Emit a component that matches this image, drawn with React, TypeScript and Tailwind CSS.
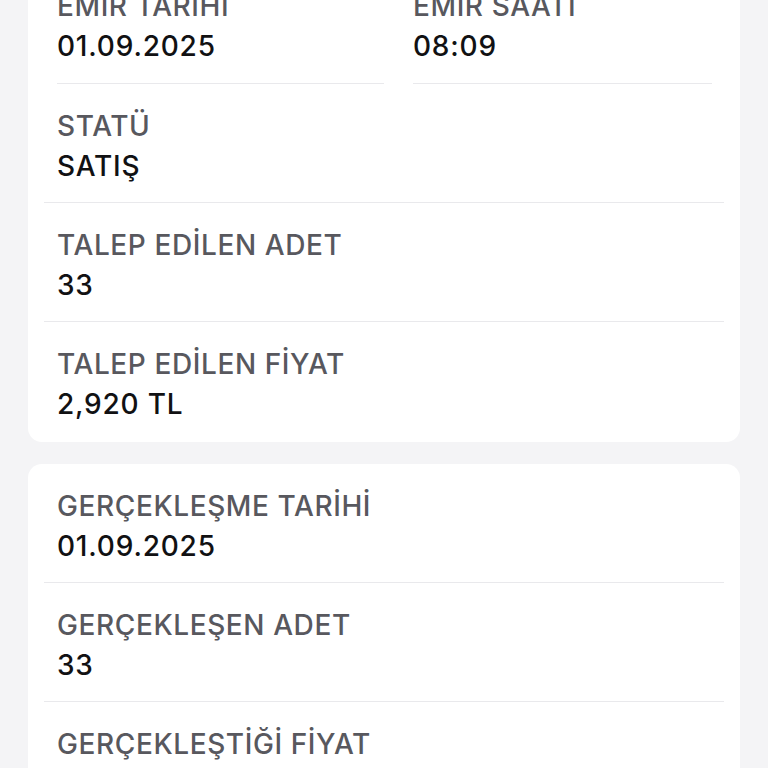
type Field = { label: string; value: string }

const orderFields: Field[] = [
  { label: 'STATÜ', value: 'SATIŞ' },
  { label: 'TALEP EDİLEN ADET', value: '33' },
  { label: 'TALEP EDİLEN FİYAT', value: '2,920 TL' },
]

const fillFields: Field[] = [
  { label: 'GERÇEKLEŞME TARİHİ', value: '01.09.2025' },
  { label: 'GERÇEKLEŞEN ADET', value: '33' },
  { label: 'GERÇEKLEŞTİĞİ FİYAT', value: '2,920 TL' },
]

function FieldText({ label, value }: Field) {
  return (
    <>
      <div className="text-[28px] leading-[40px] font-medium text-[#58585e] tracking-[0.6px]">{label}</div>
      <div className="text-[28px] leading-[40px] font-medium text-[#111113] tracking-[0.8px]">{value}</div>
    </>
  )
}

function Row({ field, last }: { field: Field; last?: boolean }) {
  return (
    <div className={last ? 'pt-[22px] pb-[18px]' : 'pt-[22px] pb-[16px] border-b border-[#e9e9ec]'}>
      <div className="pl-[13px]">
        <FieldText {...field} />
      </div>
    </div>
  )
}

export default function App() {
  return (
    <div className="h-[768px] overflow-hidden bg-[#f4f4f6] font-['Inter','Noto_Sans',sans-serif]">
      <div className="-mt-[36px] px-[28px] flex flex-col gap-[22px]">
        {/* Order details */}
        <div className="bg-white rounded-[14px]">
          <div className="flex pl-[29px] pr-[28px] gap-[29px]">
            <div className="w-[327px] pt-[22px] pb-[17px] border-b border-[#e9e9ec]">
              <FieldText label="EMİR TARİHİ" value="01.09.2025" />
            </div>
            <div className="flex-1 pt-[22px] pb-[17px] border-b border-[#e9e9ec]">
              <FieldText label="EMİR SAATİ" value="08:09" />
            </div>
          </div>
          <div className="px-[16px]">
            {orderFields.map((f, i) => (
              <Row key={f.label} field={f} last={i === orderFields.length - 1} />
            ))}
          </div>
        </div>

        {/* Fill details */}
        <div className="bg-white rounded-[14px]">
          <div className="px-[16px]">
            {fillFields.map((f, i) => (
              <Row key={f.label} field={f} last={i === fillFields.length - 1} />
            ))}
          </div>
        </div>
      </div>
    </div>
  )
}
